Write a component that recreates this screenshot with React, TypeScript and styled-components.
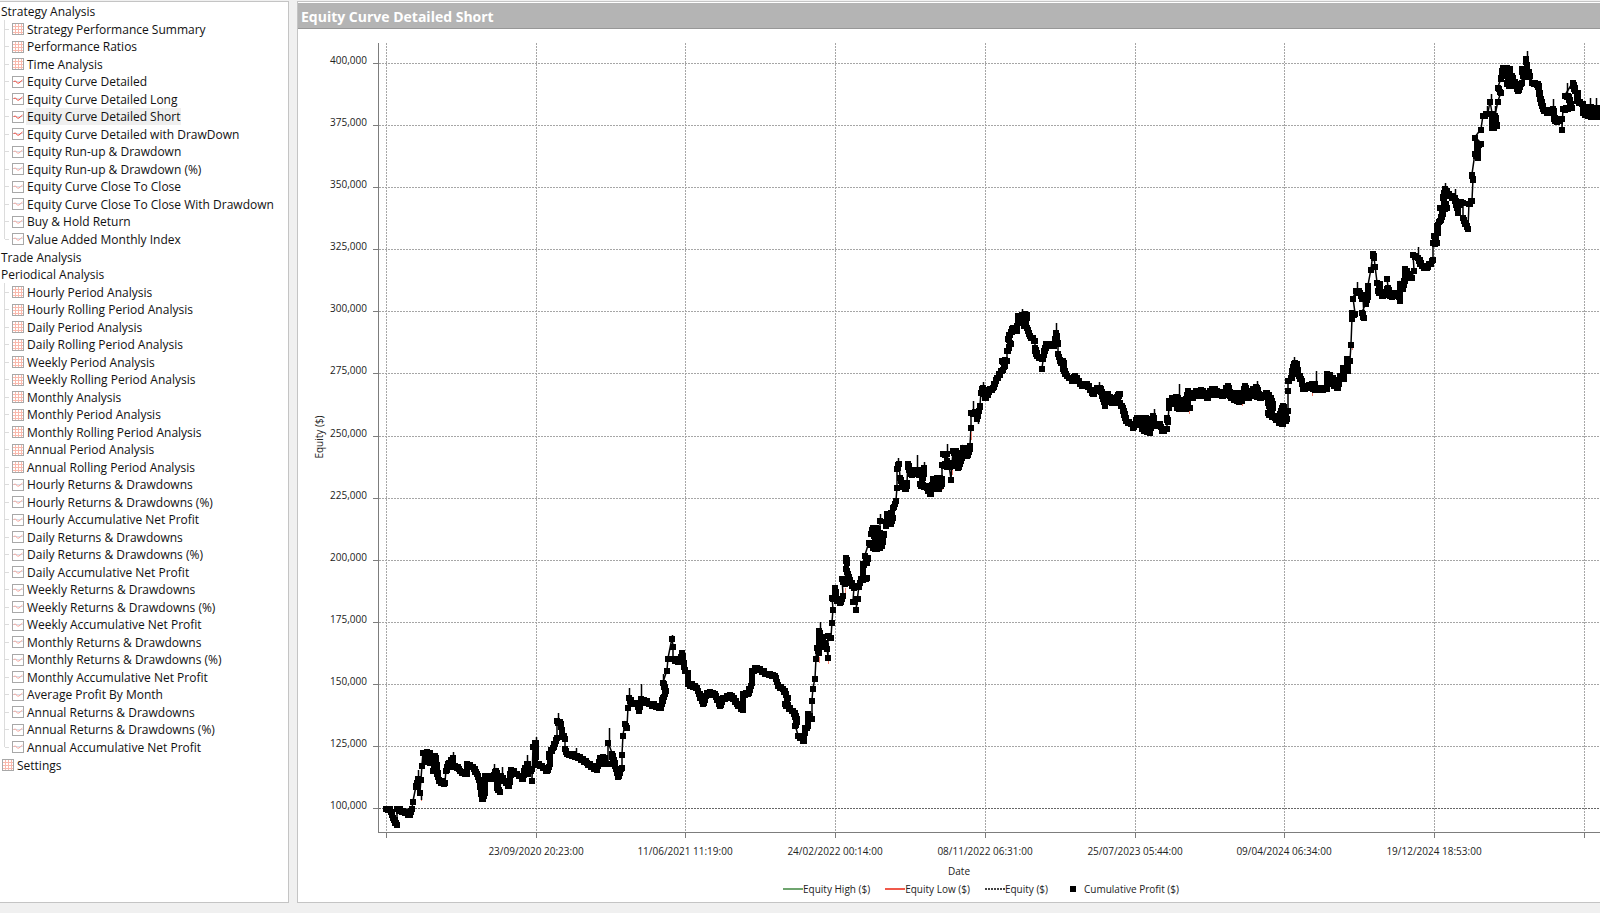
import React, { useState } from "react";
import styled, { createGlobalStyle } from "styled-components";

const GlobalStyle = createGlobalStyle`
  *, *::before, *::after { box-sizing: border-box; }
  body {
    margin: 0;
    background: #f0f0f0;
    color: #111;
    font-family: "Open Sans", "Noto Sans", sans-serif;
    font-size: 12px;
  }
  ul { list-style: none; margin: 0; padding: 0; }
`;

const Page = styled.div`
  display: flex;
  gap: 8px;
  min-height: 100vh;
  padding: 1px 0 10px;
  overflow: hidden;
`;

const Sidebar = styled.nav`
  flex: 0 0 289px;
  background: #fff;
  border: 1px solid #c4c4c4;
  border-left: 0;
  padding-top: 1px;
`;

const Group = styled.li`
  display: block;
`;

const Branch = styled.ul`
  display: grid;
  grid-auto-rows: 18px 17px;
  padding-left: 4px;
`;

const Leaf = styled.li`
  display: flex;
  align-items: center;
  border-left: 1px solid #dcdcdc;

  &::before {
    content: "";
    width: 4px;
    height: 1px;
    margin-right: 3px;
    background: #dcdcdc;
  }

  &:last-child {
    border-left-color: transparent;
    background: linear-gradient(#dcdcdc, #dcdcdc) 0 0 / 1px 50% no-repeat border-box;
  }
`;

const TreeButton = styled.button<{ $tall?: boolean }>`
  display: flex;
  align-items: center;
  gap: 2px;
  height: ${(p) => (p.$tall ? 18 : 17)}px;
  padding: 0;
  border: 0;
  background: none;
  color: inherit;
  font: inherit;
  line-height: 17px;
  white-space: nowrap;
  cursor: pointer;

  svg { flex: none; }
`;

const RootButton = styled(TreeButton)`
  padding-left: 2px;
`;

const Label = styled.span<{ $selected?: boolean }>`
  padding: 0 1px;
  background: ${(p) => (p.$selected ? "#f0f0f0" : "transparent")};
`;

const Report = styled.main`
  flex: 1;
  min-width: 0;
  display: flex;
  flex-direction: column;
  background: #fff;
  border: 1px solid #c4c4c4;
  border-right: 0;
  padding-top: 1px;
`;

const Title = styled.h1`
  margin: 0;
  height: 26px;
  padding-left: 3px;
  background: #b4b4b4;
  border-bottom: 1px solid #979797;
  color: #fff;
  font-size: 14px;
  font-weight: 700;
  line-height: 27px;
`;

const Chart = styled.svg`
  display: block;
  width: 100%;
  font-size: 10px;
  fill: #222;
`;

const Footer = styled.div`
  display: flex;
  flex-direction: column;
  align-items: center;
  font-size: 10px;
  line-height: 18px;
  color: #222;
`;

const AxisTitle = styled.div`
  padding-left: 20px;
`;

const Legend = styled.ul`
  display: flex;
  gap: 15px;
  padding-left: 64px;
`;

const LegendItem = styled.li`
  display: flex;
  align-items: center;
`;

type IconKind = "table" | "chart" | "bold";

const TableIcon = () => (
  <svg width="12" height="12" viewBox="0 0 12 12" fill="none" shapeRendering="crispEdges">
    <path d="M3.5 1v10M6.5 1v10M9.5 1v10M1 3.5h10M1 6.5h10M1 9.5h10" stroke="#f9b9ad" />
    <rect x="0.5" y="0.5" width="11" height="11" stroke="#a8a8a8" />
  </svg>
);

const ChartIcon = ({ bold }: { bold: boolean }) => (
  <svg width="12" height="12" viewBox="0 0 12 12" fill="none">
    <path d="M1 5.5h10" stroke="#d5e0ea" />
    <path d="M1.5 5.5L3.5 5L5.5 7.2L7 7L10.5 4" stroke={bold ? "#ee4a3c" : "#f3a79e"} />
    <rect x="0.5" y="0.5" width="11" height="11" stroke="#a8a8a8" />
  </svg>
);

const NodeIcon = ({ kind }: { kind: IconKind }) =>
  kind === "table" ? <TableIcon /> : <ChartIcon bold={kind === "bold"} />;

const strategy: [string, IconKind][] = [
  ["Strategy Performance Summary", "table"],
  ["Performance Ratios", "table"],
  ["Time Analysis", "table"],
  ["Equity Curve Detailed", "bold"],
  ["Equity Curve Detailed Long", "bold"],
  ["Equity Curve Detailed Short", "bold"],
  ["Equity Curve Detailed with DrawDown", "bold"],
  ["Equity Run-up & Drawdown", "chart"],
  ["Equity Run-up & Drawdown (%)", "chart"],
  ["Equity Curve Close To Close", "chart"],
  ["Equity Curve Close To Close With Drawdown", "chart"],
  ["Buy & Hold Return", "chart"],
  ["Value Added Monthly Index", "chart"],
];

const periodical: [string, IconKind][] = [
  ["Hourly Period Analysis", "table"],
  ["Hourly Rolling Period Analysis", "table"],
  ["Daily Period Analysis", "table"],
  ["Daily Rolling Period Analysis", "table"],
  ["Weekly Period Analysis", "table"],
  ["Weekly Rolling Period Analysis", "table"],
  ["Monthly Analysis", "table"],
  ["Monthly Period Analysis", "table"],
  ["Monthly Rolling Period Analysis", "table"],
  ["Annual Period Analysis", "table"],
  ["Annual Rolling Period Analysis", "table"],
  ["Hourly Returns & Drawdowns", "chart"],
  ["Hourly Returns & Drawdowns (%)", "chart"],
  ["Hourly Accumulative Net Profit", "chart"],
  ["Daily Returns & Drawdowns", "chart"],
  ["Daily Returns & Drawdowns (%)", "chart"],
  ["Daily Accumulative Net Profit", "chart"],
  ["Weekly Returns & Drawdowns", "chart"],
  ["Weekly Returns & Drawdowns (%)", "chart"],
  ["Weekly Accumulative Net Profit", "chart"],
  ["Monthly Returns & Drawdowns", "chart"],
  ["Monthly Returns & Drawdowns (%)", "chart"],
  ["Monthly Accumulative Net Profit", "chart"],
  ["Average Profit By Month", "chart"],
  ["Annual Returns & Drawdowns", "chart"],
  ["Annual Returns & Drawdowns (%)", "chart"],
  ["Annual Accumulative Net Profit", "chart"],
];

const parseRuns = (text: string) =>
  text
    .trim()
    .split("\n")
    .map((line) => line.split(" ").map((pair) => pair.split(",").map(Number)));

// Runs of closely spaced trades; a thin equity line joins one run to the next.
const runs = parseRuns(`
386,808 390,808 393,817 397,824
397,808 403,810 409,814 412,808
413,801
416,786 418,778
420,792
421,779
422,765
423,752 430,752 425,760 433,762 435,755 437,767 433,770
437,770 439,780 445,782
446,770 449,762 453,757 452,765 458,766 460,770 467,773 467,763 473,766 477,773 480,783 482,798 485,792 485,775 493,778 496,770 498,778 497,787 500,791
501,775 505,780 509,785 511,769 517,773 523,778 525,767 528,763 527,773 532,768
532,780
533,746 536,742 536,753 535,762 542,765 547,770 550,763 549,753 553,747 557,737
557,720 561,723 562,733 565,738
565,748 567,753 577,755 587,762 597,769 600,757 605,757 602,763
608,763
608,742
612,753 615,765 618,776 622,767
622,754
623,735
625,723 627,727
628,707
629,697 632,702 637,703 639,710 641,698 650,703 661,707 663,697 666,690 663,682
667,670
668,658
672,638
673,646
673,658 680,660 682,652 685,670
688,672 688,683 695,685 697,687 703,703 707,692 715,693 720,705 723,697 732,695 737,703 743,709 743,693 748,693 752,682 752,670 757,667 767,673 775,675 778,685 783,688 788,697 785,703 793,710 797,718 795,725
798,735 804,740 805,727 808,725 808,713 812,718
812,700
813,688
815,678
816,658
817,647 819,652 819,630 823,640 827,648
828,657
828,635 831,637
832,622
833,609
832,597 836,596 835,587
836,598 840,602 843,595
842,578 845,583
846,568 848,573
846,557 847,562
848,573 850,580 854,587
853,601 858,598
856,609
859,586 861,578 867,577
863,573 863,563 867,562 868,557 865,555
869,542 875,548 882,545 884,533 871,533 873,527 878,528 877,538 880,540
880,520
886,525 887,513 890,523 893,517 891,512
893,507 896,500
897,487
897,468 899,463
900,477 902,483 905,488 907,482
908,463 910,473 917,472 922,475 924,467 923,477 920,483 927,487 931,493 933,478 942,478 938,488 942,483
942,464 952,465 947,460
943,453 947,453
951,479
953,450 957,452 955,462 958,467 962,457 963,447 967,455 970,445
971,427
971,412 978,412 977,418 980,405
981,392 983,387 985,397 990,388 993,387 997,377 1002,370 1005,365 1002,360 1007,360
1007,350 1011,343 1008,338 1013,327 1017,330 1018,315 1027,314 1025,322 1020,320 1027,327 1030,335 1035,340
1035,347 1037,355 1043,358 1045,347
1042,368
1045,347 1047,343 1052,345 1055,343 1056,332 1058,343
1058,353 1060,360 1064,362 1063,368 1067,375 1073,380 1075,375 1082,385 1087,383 1093,393 1097,387 1101,388 1102,395 1105,405 1108,393 1112,402 1120,393 1115,397 1123,407 1126,420 1132,423
1133,427 1137,417 1143,418 1148,418 1142,428 1150,432 1153,415 1155,425 1160,423 1162,430 1167,428
1167,417 1168,421
1169,407 1169,400 1173,397 1178,397 1182,405 1177,407 1190,407 1185,402 1188,390 1192,397 1197,390 1203,390 1207,397 1212,388 1217,390 1223,395 1228,385 1230,395 1237,400 1242,400 1245,385 1248,397 1253,388 1257,387 1260,397 1267,392 1272,400 1273,407 1268,412 1275,417 1282,423 1287,418 1283,405 1280,413 1288,410
1288,390
1288,380 1292,377 1292,370 1295,362 1297,363 1298,373 1302,380 1303,388 1312,383 1315,383 1313,388 1327,388 1327,373 1333,377 1332,383 1338,387 1340,375 1344,378 1343,367 1348,370 1347,358 1350,360
1351,344
1352,318 1352,312 1355,313
1353,298
1356,290 1360,292 1363,298
1364,317 1362,312
1366,303 1368,293 1368,285
1371,269
1373,253 1374,257
1375,266
1377,282 1380,283 1378,290 1383,295 1388,287
1387,278
1388,287 1390,295 1398,293 1400,300 1400,283 1403,288 1405,277 1405,268 1412,277
1414,270
1413,254 1418,257 1422,265 1427,267 1433,259
1433,242 1437,242 1434,235 1438,232 1437,225 1440,220 1443,210 1440,207 1447,207 1443,197 1445,188 1450,195 1455,197 1458,212 1458,203 1463,202
1463,217 1468,228
1469,203 1472,200
1473,179 1472,174
1475,153 1478,157 1477,143 1481,143
1475,137
1481,129
1483,115 1488,113
1490,101
1492,113 1492,127 1497,125 1495,115
1498,101
1501,92 1498,87
1501,78 1503,67 1510,68 1507,83 1512,85 1512,75 1518,90 1522,82
1522,68 1523,75 1530,75 1527,68 1526,58
1532,82 1538,83 1540,95 1543,108 1548,112 1553,108 1555,120 1562,118
1562,129
1563,108 1566,107 1572,107 1568,95 1565,95
1573,82 1575,90 1578,92 1577,100 1583,103 1583,112 1593,115 1600,115
`);

// Trades that overlap the busiest runs, drawn as markers only.
const clusters = parseRuns(`
1134,423 1142,423 1150,425
1171,402 1188,402
1188,395 1207,393 1232,392 1244,394 1266,395
1268,402 1271,410
1277,416 1286,412
910,470 922,470
932,484 940,484
874,535 880,546
1506,75 1512,78
1584,107 1600,108
1586,111 1600,111
`);

const markerPath = (() => {
  const square = (x: number, y: number) => `M${x - 3} ${y - 2}h6v6h-6z`;
  let d = "";
  for (const run of [...runs, ...clusters]) {
    run.forEach(([x, y], i) => {
      d += square(x, y);
      const next = run[i + 1];
      if (!next) return;
      const steps = Math.ceil(Math.hypot(next[0] - x, next[1] - y) / 2);
      for (let s = 1; s < steps; s++) {
        const wobble = s % 2 ? 1 : -1;
        d += square(
          Math.round(x + ((next[0] - x) * s) / steps),
          Math.round(y + ((next[1] - y) * s) / steps) + wobble
        );
      }
    });
  }
  return d;
})();

const linePoints = runs.flat().map((p) => p.join(",")).join(" ");

// Intraday excursions as x, from, to.
const excursions = [
  [558, 713, 720], [418, 770, 778], [536, 737, 742], [576, 748, 755], [609, 728, 742],
  [629, 688, 697], [641, 684, 698], [494, 764, 772], [502, 767, 775], [527, 755, 765],
  [421, 792, 800], [482, 794, 801], [453, 752, 758], [672, 635, 640], [663, 674, 684],
  [820, 622, 632], [917, 455, 470], [880, 514, 520], [924, 462, 468], [898, 458, 465],
  [947, 444, 452], [973, 401, 412], [978, 412, 424], [983, 382, 390], [1022, 309, 315],
  [1056, 323, 332], [1099, 382, 390], [1154, 409, 416], [1179, 384, 396], [1316, 371, 382],
  [1257, 381, 388], [1294, 357, 364], [1357, 282, 290], [1418, 247, 256], [1445, 183, 190],
  [1455, 189, 197], [1491, 94, 101], [1495, 106, 115], [1527, 51, 60], [1553, 99, 108],
  [1567, 83, 95], [1590, 98, 108], [1596, 98, 108], [1487, 106, 114], [905, 484, 492],
];

const lows = [
  [421, 797, 801], [666, 692, 697], [819, 657, 663], [828, 660, 664], [845, 588, 596],
  [868, 578, 582], [893, 515, 520], [942, 487, 490], [931, 494, 497], [952, 465, 475],
  [971, 432, 440], [1189, 408, 414], [1183, 407, 412], [1242, 402, 406], [1312, 392, 396],
  [1352, 344, 350], [1380, 292, 297], [1400, 301, 304], [1495, 127, 131], [1429, 266, 269],
];

const gridX = [386, 536, 685, 835, 985, 1135, 1284, 1434, 1584];
const dates = [
  "23/09/2020 20:23:00",
  "11/06/2021 11:19:00",
  "24/02/2022 00:14:00",
  "08/11/2022 06:31:00",
  "25/07/2023 05:44:00",
  "09/04/2024 06:34:00",
  "19/12/2024 18:53:00",
];
const levels = Array.from({ length: 13 }, (_, i) => ({
  label: `${400 - i * 25},000`,
  y: Math.round(64 + (i * 745) / 12),
}));

const EquityChart = () => (
  <Chart viewBox="298 29 1302 833" role="img" aria-label="Equity curve">
    <g stroke="#a6a6a6" strokeDasharray="2 1" shapeRendering="crispEdges">
      {levels.map((l) => (
        <line key={l.label} x1="379" x2="1600" y1={l.y - 0.5} y2={l.y - 0.5} />
      ))}
      {gridX.map((x) => (
        <line key={x} x1={x + 0.5} x2={x + 0.5} y1="43" y2="832" />
      ))}
    </g>
    <line x1="379" x2="1600" y1="808.5" y2="808.5" stroke="#666" strokeDasharray="2 1" />
    <g stroke="#7d7d7d" shapeRendering="crispEdges">
      <path d="M378.5 43V832.5H1600" fill="none" />
      {levels.map((l) => (
        <line key={l.label} x1="373" x2="379" y1={l.y - 0.5} y2={l.y - 0.5} />
      ))}
      {gridX.map((x) => (
        <line key={x} x1={x + 0.5} x2={x + 0.5} y1="832" y2="838" />
      ))}
    </g>
    {levels.map((l) => (
      <text key={l.label} x="367" y={l.y} textAnchor="end">{l.label}</text>
    ))}
    {dates.map((d, i) => (
      <text key={d} x={gridX[i + 1]} y="855" textAnchor="middle">{d}</text>
    ))}
    <text transform="translate(323 437) rotate(-90)" textAnchor="middle">Equity ($)</text>
    <polyline points={linePoints} fill="none" stroke="#000" strokeWidth="1.5" />
    <g stroke="#f0806f">
      {lows.map(([x, a, b]) => <line key={x} x1={x + 0.5} x2={x + 0.5} y1={a} y2={b} />)}
    </g>
    <g stroke="#000" strokeWidth="1.5">
      {excursions.map(([x, a, b]) => <line key={x} x1={x + 0.5} x2={x + 0.5} y1={a} y2={b} />)}
    </g>
    <path d={markerPath} fill="#000" />
  </Chart>
);

const Swatch = ({ color, dashed }: { color: string; dashed?: boolean }) => (
  <svg width="20" height="2" aria-hidden="true">
    <line x1="0" x2="20" y1="1" y2="1" stroke={color} strokeWidth="2" strokeDasharray={dashed ? "2 1" : undefined} />
  </svg>
);

const SquareSwatch = styled.span`
  width: 6px;
  height: 6px;
  margin: 0 8px 0 7px;
  background: #000;
`;

export default function App() {
  const [selected, setSelected] = useState("Equity Curve Detailed Short");

  const branch = (items: [string, IconKind][]) => (
    <Branch>
      {items.map(([name, kind]) => (
        <Leaf key={name}>
          <TreeButton type="button" onClick={() => setSelected(name)}>
            <NodeIcon kind={kind} />
            <Label $selected={selected === name}>{name}</Label>
          </TreeButton>
        </Leaf>
      ))}
    </Branch>
  );

  return (
    <>
      <GlobalStyle />
      <Page>
        <Sidebar aria-label="Reports">
          <ul>
            <Group>
              <TreeButton type="button"><Label>Strategy Analysis</Label></TreeButton>
              {branch(strategy)}
            </Group>
            <Group>
              <TreeButton type="button" $tall><Label>Trade Analysis</Label></TreeButton>
            </Group>
            <Group>
              <TreeButton type="button"><Label>Periodical Analysis</Label></TreeButton>
              {branch(periodical)}
            </Group>
            <Group>
              <RootButton type="button" $tall>
                <NodeIcon kind="table" />
                <Label>Settings</Label>
              </RootButton>
            </Group>
          </ul>
        </Sidebar>
        <Report>
          <Title>{selected}</Title>
          <EquityChart />
          <Footer>
            <AxisTitle>Date</AxisTitle>
            <Legend>
              <LegendItem><Swatch color="#6fa56f" />Equity High ($)</LegendItem>
              <LegendItem><Swatch color="#f0594b" />Equity Low ($)</LegendItem>
              <LegendItem><Swatch color="#444" dashed />Equity ($)</LegendItem>
              <LegendItem><SquareSwatch />Cumulative Profit ($)</LegendItem>
            </Legend>
          </Footer>
        </Report>
      </Page>
    </>
  );
}
